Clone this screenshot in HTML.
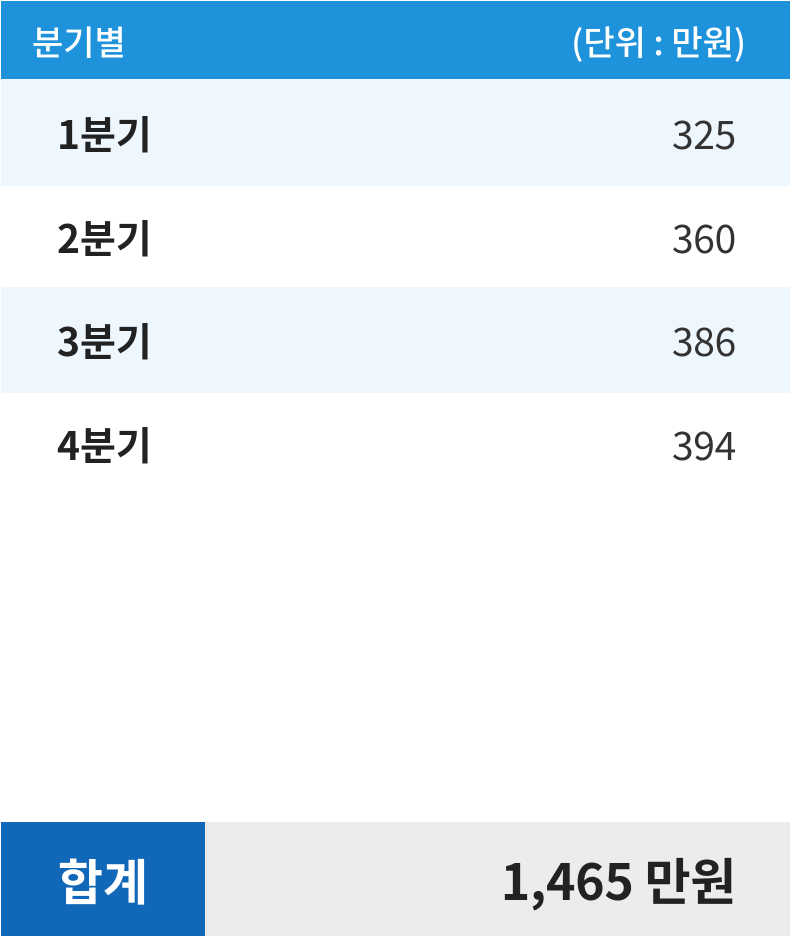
<!DOCTYPE html>
<html><head><meta charset="utf-8"><style>
*{margin:0;padding:0;box-sizing:border-box}
body{width:790px;height:936px;background:#fff;position:relative;overflow:hidden;font-family:"Noto Sans CJK KR","Liberation Sans",sans-serif;color:#222}
.hd,.row,.ft .b,.ft .v{display:flex;align-items:center}
.hd{position:absolute;left:1px;top:1px;width:789px;height:78px;background:#1e93db;color:#fff;font-size:34px;font-weight:500;justify-content:space-between;padding:0 44px 0 31px}
.row{position:absolute;left:1px;width:789px;justify-content:space-between;padding:0 54px 0 56px}
.row .l{font-weight:bold;font-size:39px}
.row .r{color:#333;font-weight:400;font-size:39px;letter-spacing:-0.3px}
.ft{position:absolute;left:1px;top:822px;width:789px;height:114px;background:#ececec}
.ft .b{position:absolute;left:0;top:0;width:204px;height:114px;background:#1167b8;color:#fff;font-size:49px;font-weight:bold;justify-content:center}
.ft .v{position:absolute;right:54px;top:0;height:114px;font-size:50px;font-weight:bold;color:#222;letter-spacing:-0.3px}
</style></head><body>
<div class="hd"><span>분기별</span><span>(단위 : 만원)</span></div>
<div class="row" style="top:79px;height:107px;background:#eef6fe"><span class="l">1분기</span><span class="r">325</span></div>
<div class="row" style="top:186px;height:101px"><span class="l">2분기</span><span class="r">360</span></div>
<div class="row" style="top:287px;height:106px;background:#eef6fe"><span class="l">3분기</span><span class="r">386</span></div>
<div class="row" style="top:393px;height:101px"><span class="l">4분기</span><span class="r">394</span></div>
<div class="ft"><div class="b">합계</div><div class="v">1,465 만원</div></div>
</body></html>
